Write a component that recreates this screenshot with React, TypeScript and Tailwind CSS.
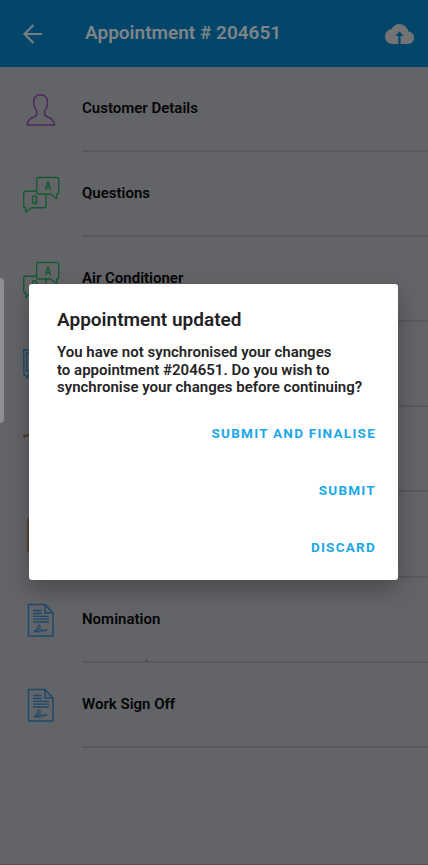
import type { ReactNode } from 'react';

function PersonIcon() {
  return (
    <svg width="32" height="34" viewBox="0 0 32 34" fill="none" stroke="#4b2a5c" strokeWidth="1.5" strokeLinejoin="round">
      <path d="M15.5 1.8C11 1.8 8.7 4.600 8.700 9c0 4 1.300 6.700 3.100 8.600v3.700c0 1.400-1.200 2-3 2.700C4.500 25.600 2.300 27.500 2 32h27.500c-.3-4.500-2.500-6.400-6.800-8-1.800-.7-3-1.300-3-2.700v-3.700C21.500 15.700 22.500 13 22.500 9c0-4.400-2.500-7.200-7-7.200Z" />
    </svg>
  );
}

function QuestionsIcon() {
  return (
    <svg width="38" height="38" viewBox="0 0 38 38" fill="none" stroke="#145b32" strokeWidth="1.400" strokeLinejoin="round">
      <path d="M16.200 1.500H35.300c1 0 1.500.5 1.500 1.500v13.500c0 1-.5 1.500-1.500 1.500h-.6v4.500L28.500 18H16.200c-1 0-1.500-.5-1.500-1.500V3c0-1 .5-1.500 1.500-1.500Z" />
      <path d="M14.700 15.200H3.200c-1 0-1.500.5-1.500 1.500v13.500c0 1 .5 1.500 1.500 1.500h.6v4.600L9.500 31.700h13c1 0 1.500-.5 1.500-1.500V18" />
      <path d="M23.500 14 25.700 6h.5l2.200 8M24.300 11.500h3.300" />
      <path d="M12.500 19.700c-1.500 0-2 1-2 2v4c0 1 .5 2 2 2s2-1 2-2v-4c0-1-.5-2-2-2ZM12.800 25.700l2 2.400" />
    </svg>
  );
}

function DocumentIcon() {
  return (
    <svg width="28" height="35" viewBox="0 0 28 35" fill="none" stroke="#1e496b" strokeWidth="1.500">
      <path d="M1.500 1.500H18l8 8.500v23H1.500Z" />
      <path d="M18 1.500V10h8" />
      <path d="M6 7.500h8.500M6 10.500h8.500M6 13.300h16M6 16.200h16M6 19h16" strokeWidth="1.300" />
      <path d="M9 28c3-1 5-4 4-5.500-.8-1-2.700 0-3 2.500-.3 2 0 3.500-1.500 4-1.500.3-1.500-1.500 0-1.500s2 1.700 3 1.700c1.300 0 1.700-2.800 2.500-2.700.7.100-.2 2.300.7 2.300 1 0 1.800-2.500 2.500-2.300.6.200.1 1.500 1 1.400.9-.1 1.300-1.100 2.200-1.200" strokeWidth="1.200" />
    </svg>
  );
}

function ScreenIcon() {
  return (
    <svg width="36" height="34" viewBox="0 0 36 34" fill="none" stroke="#1e496b" strokeWidth="1.400">
      <path d="M1.700 2H34v25H6v3l-4-3.500Z" />
      <path d="M4.700 5H31v18H4.700Z" />
    </svg>
  );
}

function HookIcon() {
  return (
    <svg width="36" height="34" viewBox="0 0 36 34" fill="none" stroke="#573516" strokeWidth="2" strokeLinecap="round">
      <path d="M2 3.700c0-1 1-1.300 2.500-1.300H18v20" />
    </svg>
  );
}

function PanelIcon() {
  return (
    <svg width="28" height="34" viewBox="0 0 28 34" fill="#6a483b" stroke="#573722" strokeWidth="1.300">
      <path d="M1 1h26v32H1Z" />
    </svg>
  );
}

function Row({ icon, label, pad = 'pl-[22px]' }: { icon: ReactNode; label: string; pad?: string }) {
  return (
    <li className="flex h-[85.1px]">
      <div className={`flex w-[82px] shrink-0 items-center ${pad}`}>{icon}</div>
      <div className="flex grow items-center border-b-2 border-[#58595c] text-[15px] font-semibold text-[#050506]">{label}</div>
    </li>
  );
}

export default function App() {
  return (
    <div className="relative h-[865px] w-full overflow-hidden border-b border-[#535354] bg-[#636467] font-['Roboto',sans-serif]">
      <header className="flex h-[67px] items-center bg-[#04466a] pr-[14px] pl-[22px]">
        <svg width="22" height="22" viewBox="0 0 22 22" fill="none" stroke="#757d82" strokeWidth="2.200">
          <path d="M20 11H2.500M11.500 2 2.500 11l9 9" />
        </svg>
        <h1 className="ml-[41px] grow text-[19px] font-semibold text-[#7e8487]">Appointment # 204651</h1>
        <svg width="29" height="20" viewBox="0 0 24 16" fill="#737375" preserveAspectRatio="none">
          <path fillRule="evenodd" d="M19.350 6.040A7.490 7.490 0 0 0 12 0C9.110 0 6.600 1.640 5.350 4.040A5.994 5.994 0 0 0 0 10c0 3.310 2.690 6 6 6h13c2.760 0 5-2.240 5-5 0-2.640-2.050-4.780-4.650-4.960ZM12.900 9.500V16h-1.800V9.500H8.500L12 6l3.500 3.500Z" />
        </svg>
      </header>

      <ul>
        <Row icon={<PersonIcon />} label="Customer Details" pad="pl-[25px]" />
        <Row icon={<QuestionsIcon />} label="Questions" />
        <Row icon={<QuestionsIcon />} label="Air Conditioner" />
        <Row icon={<ScreenIcon />} label="" />
        <Row icon={<HookIcon />} label="" />
        <Row icon={<PanelIcon />} label="" pad="pl-[27px]" />
        <Row icon={<DocumentIcon />} label="Nomination" pad="pl-[27px]" />
        <Row icon={<DocumentIcon />} label="Work Sign Off" pad="pl-[27px]" />
      </ul>

      <div className="absolute top-[660px] left-[146px] size-px bg-[#151517]" />
      <div className="absolute top-[278px] left-0 h-[145px] w-1 rounded-r-[4px] bg-[#8f9092]" />

      <section
        role="dialog"
        className="absolute top-[284px] left-[29px] flex h-[296px] w-[369px] flex-col rounded-[3px] bg-white px-[28px] pt-[23px] shadow-[0_9px_22px_rgba(0,0,0,0.28)]"
      >
        <h2 className="text-[19px] leading-[25px] font-semibold text-[#222224]">Appointment updated</h2>
        <p className="mt-[12px] text-[15px] leading-[17.500px] font-semibold whitespace-nowrap text-[#242426]">
          You have not synchronised your changes
          <br />
          to appointment #204651. Do you wish to
          <br />
          synchronise your changes before continuing?
        </p>
        <div className="-mr-[6px] mt-[8px] flex flex-col items-end text-[13.500px] font-bold tracking-[1.250px] text-[#1ba7e8]">
          <button className="h-[57px]">SUBMIT AND FINALISE</button>
          <button className="h-[57px]">SUBMIT</button>
          <button className="h-[57px]">DISCARD</button>
        </div>
      </section>
    </div>
  );
}
